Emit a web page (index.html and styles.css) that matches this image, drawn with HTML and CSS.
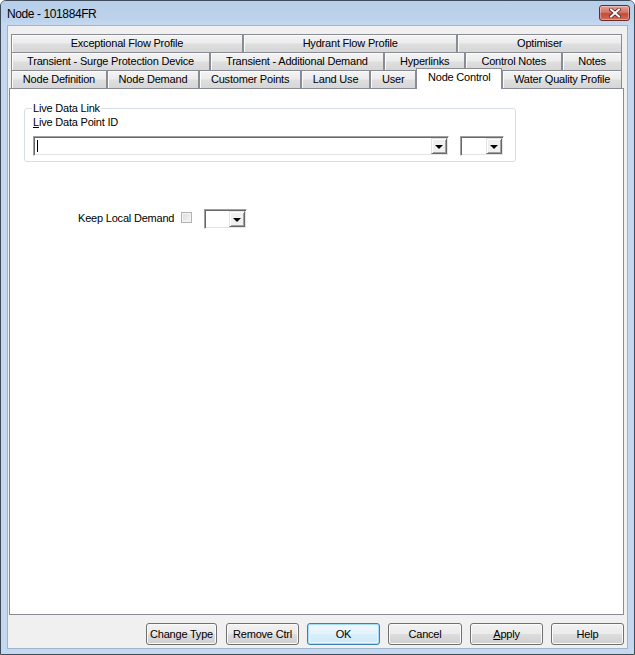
FILE: index.html
```html
<!DOCTYPE html>
<html lang="en">
<head>
  <meta charset="UTF-8" />
  <title>Node - 101884FR</title>
  <link rel="stylesheet" href="styles.css">
</head>
<body>

<div class="window">
  <div class="titlebar">
    <span class="title">Node - 101884FR</span>
    <div class="close-btn">
      <svg width="12" height="10" viewBox="0 0 12 10">
        <path d="M2 1.5 L10 8.5 M10 1.5 L2 8.5" stroke="#5a2320" stroke-width="3.6" stroke-linecap="square"/>
        <path d="M2 1.5 L10 8.5 M10 1.5 L2 8.5" stroke="#fff" stroke-width="2" stroke-linecap="square"/>
      </svg>
    </div>
  </div>

  <div class="client">
    <div class="tabs">
      <div class="tab-row">
        <div class="tab">Exceptional Flow Profile</div>
        <div class="tab">Hydrant Flow Profile</div>
        <div class="tab">Optimiser</div>
      </div>
      <div class="tab-row">
        <div class="tab">Transient - Surge Protection Device</div>
        <div class="tab">Transient - Additional Demand</div>
        <div class="tab">Hyperlinks</div>
        <div class="tab">Control Notes</div>
        <div class="tab">Notes</div>
      </div>
      <div class="tab-row">
        <div class="tab">Node Definition</div>
        <div class="tab">Node Demand</div>
        <div class="tab">Customer Points</div>
        <div class="tab">Land Use</div>
        <div class="tab">User</div>
        <div class="tab selected">Node Control</div>
        <div class="tab">Water Quality Profile</div>
      </div>
    </div>

    <div class="panel">
      <fieldset class="group">
        <legend>Live Data Link</legend>
        <div class="field-label"><u>L</u>ive Data Point ID</div>
        <div class="combo-row">
          <div class="combo combo-wide">
            <span class="caret"></span>
            <span class="drop"><span class="arrow"></span></span>
          </div>
          <div class="combo combo-small">
            <span class="drop"><span class="arrow"></span></span>
          </div>
        </div>
      </fieldset>

      <div class="keep-row">
        <span class="keep-label">Keep Local Demand</span>
        <span class="checkbox"></span>
        <div class="combo combo-small">
          <span class="drop"><span class="arrow"></span></span>
        </div>
      </div>
    </div>

    <div class="buttons">
      <button class="btn btn-narrow">Change Type</button>
      <button class="btn">Remove Ctrl</button>
      <button class="btn default">OK</button>
      <button class="btn btn-cancel">Cancel</button>
      <button class="btn"><u>A</u>pply</button>
      <button class="btn">Help</button>
    </div>
  </div>
</div>

</body>
</html>
```

FILE: styles.css
```css
* { box-sizing: border-box; }
body, html {
  margin: 0;
  padding: 0;
  background: #fff;
  font-family: "Liberation Sans", Arial, sans-serif;
  font-size: 11px;
  letter-spacing: -0.2px;
  color: #000;
}
.window {
  width: 635px;
  height: 655px;
  border: 1px solid #3c4a5a;
  border-radius: 6px 6px 0 0;
  background: #c4d8ef;
  display: flex;
  flex-direction: column;
  overflow: hidden;
}
.titlebar {
  height: 25px;
  flex: none;
  display: flex;
  align-items: center;
  justify-content: space-between;
  padding: 0 4px 0 6px;
  background: linear-gradient(#b8cfe9, #bcd2eb 70%, #c6d9f0);
}
.title {
  font-size: 12px;
  letter-spacing: -0.4px;
  margin-top: 1px;
}
.close-btn {
  width: 31px;
  height: 16px;
  margin-top: -2px;
  border: 1px solid #6b2a26;
  border-radius: 3px;
  background: linear-gradient(#e4a093, #d57563 45%, #c44a38 55%, #cf6e5a);
  box-shadow: inset 0 0 0 1px rgba(255,255,255,0.35);
  display: flex;
  align-items: center;
  justify-content: center;
}
.client {
  flex: none;
  height: 622px;
  margin: 0 7px;
  background: #f0f0f0;
  box-shadow: 0 0 0 1px #9fb3cc;
  padding: 8px 2px 0 1px;
  display: flex;
  flex-direction: column;
}
.tabs {
  margin: 0 3px 0 2px;
}
.tab-row {
  display: flex;
  height: 18px;
}
.tab {
  flex: 1 1 auto;
  height: 18px;
  padding: 0 6px;
  border: 1px solid #898c95;
  border-bottom: 0;
  background: linear-gradient(#f4f4f4, #ececec 45%, #dedede 55%, #d6d6d6);
  box-shadow: inset 1px 1px #fbfbfb;
  text-align: center;
  line-height: 17px;
  white-space: nowrap;
}
.tab.selected {
  height: 21px;
  margin-top: -2px;
  background: #fff;
  box-shadow: none;
  position: relative;
  z-index: 1;
}
.panel {
  height: 527px;
  margin-right: 1px;
  border: 1px solid #898c95;
  background: #fff;
  padding: 13px 0 0 14px;
}
.group {
  width: 492px;
  margin: 0;
  padding: 0 0 5px 8px;
  border: 1px solid #d5dfe5;
  border-radius: 3px;
}
.group legend {
  padding: 0 1px;
  margin-left: -1px;
  line-height: 13px;
}
.field-label {
  line-height: 13px;
  margin-top: 1px;
}
.combo-row {
  display: flex;
  gap: 11px;
  margin-top: 7px;
}
.combo {
  height: 20px;
  border: 1px solid;
  border-color: #a0a0a0 #fff #fff #a0a0a0;
  box-shadow: inset 1px 1px #696969, inset -1px -1px #e3e3e3;
  background: #fff;
  padding: 1px;
  display: flex;
  align-items: center;
  justify-content: flex-end;
}
.combo-wide {
  width: 416px;
  justify-content: space-between;
}
.combo-small {
  width: 44px;
}
.caret {
  width: 1px;
  height: 12px;
  margin-left: 2px;
  background: #000;
}
.drop {
  width: 16px;
  height: 16px;
  background: #f0f0f0;
  border: 1px solid;
  border-color: #e3e3e3 #696969 #696969 #e3e3e3;
  box-shadow: inset 1px 1px #fff, inset -1px -1px #a0a0a0;
  display: flex;
  align-items: center;
  justify-content: center;
}
.arrow {
  width: 0;
  height: 0;
  margin-top: 1px;
  border-left: 4px solid transparent;
  border-right: 4px solid transparent;
  border-top: 4px solid #000;
}
.keep-row {
  display: flex;
  align-items: center;
  margin-top: 47px;
  padding-left: 54px;
}
.keep-label {
  width: 99px;
  margin-top: -2px;
  white-space: nowrap;
}
.checkbox {
  width: 11px;
  height: 11px;
  margin: -4px 0 0 4px;
  border: 1px solid #b1b1b1;
  background: linear-gradient(135deg, #dcdcdc, #f6f6f6);
  box-shadow: inset 0 0 0 1px #f4f4f4;
}
.keep-row .combo {
  margin-left: 12px;
  width: 43px;
}
.buttons {
  display: flex;
  justify-content: flex-end;
  gap: 8px;
  margin-top: 8px;
  padding-right: 1px;
}
.btn {
  width: 73px;
  height: 22px;
  padding: 0;
  border: 1px solid #707070;
  border-radius: 3px;
  background: linear-gradient(#f2f2f2, #ebebeb 48%, #dddddd 52%, #cfcfcf);
  box-shadow: inset 0 0 0 1px #fbfbfb;
  font-family: "Liberation Sans", Arial, sans-serif;
  font-size: 11px;
  letter-spacing: -0.2px;
  color: #000;
}
.btn-narrow { width: 71px; margin-right: 1px; }
.btn-cancel { width: 74px; }
.btn.default {
  border-color: #3c7fb1;
  background: linear-gradient(#f0f8fd, #e5f3fb 48%, #d9eefa 52%, #cde8f8);
  box-shadow: inset 0 0 0 1px #a9dcf6, inset 0 0 0 2px #e6f5fd;
}
```
